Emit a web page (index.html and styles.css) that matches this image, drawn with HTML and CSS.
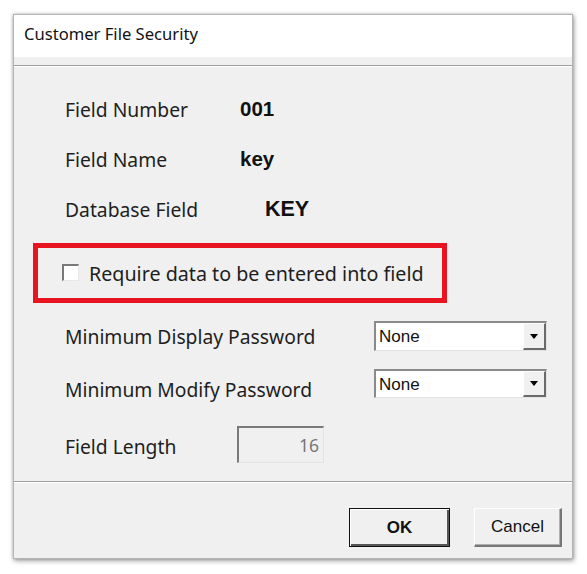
FILE: index.html
```html
<!DOCTYPE html>
<html>
<head>
<meta charset="utf-8">
<link rel="stylesheet" href="styles.css">
</head>
<body>
<div class="window">
  <div class="titlebar">Customer File Security</div>
  <div class="band"></div>
  <div class="panel">
    <div class="info">
      <div class="row"><span class="label">Field Number</span><span class="value">001</span></div>
      <div class="row"><span class="label">Field Name</span><span class="value">key</span></div>
      <div class="row"><span class="label">Database Field</span><span class="value value-shift">KEY</span></div>
    </div>
    <div class="highlight">
      <span class="checkbox"></span>
      <span class="check-label">Require data to be entered into field</span>
    </div>
    <div class="form-row row-display">
      <span class="label">Minimum Display Password</span>
      <div class="select"><span class="select-text">None</span><span class="select-btn"><span class="arrow"></span></span></div>
    </div>
    <div class="form-row row-modify">
      <span class="label label-low">Minimum Modify Password</span>
      <div class="select"><span class="select-text">None</span><span class="select-btn"><span class="arrow"></span></span></div>
    </div>
    <div class="form-row row-length">
      <span class="label label-short">Field Length</span>
      <div class="numbox">16</div>
    </div>
  </div>
  <div class="footer">
    <button class="btn btn-ok">OK</button>
    <button class="btn btn-cancel">Cancel</button>
  </div>
</div>
</body>
</html>
```
FILE: styles.css
```css
* { box-sizing: border-box; }
html, body { margin: 0; padding: 0; background: #ffffff; }
body { width: 587px; height: 574px; overflow: hidden; }

.window {
  margin: 14px 0 0 13px;
  width: 560px;
  height: 545px;
  background: #f0f0f0;
  border: 1px solid #b4b4b4;
  box-shadow: 1px 2px 5px rgba(0,0,0,0.35), 0 0 3px rgba(0,0,0,0.2);
  display: flex;
  flex-direction: column;
}

.titlebar {
  height: 42px;
  background: #ffffff;
  padding: 0 0 5px 10px;
  display: flex;
  align-items: center;
  font-family: "Noto Sans", sans-serif;
  font-size: 16.6px;
  color: #111;
}

.band { height: 8px; background: #f0f0f0; }

.panel {
  height: 417px;
  border-top: 1px solid #a0a0a0;
  border-bottom: 1px solid #a0a0a0;
  box-shadow: inset 0 1px 0 #ffffff;
  padding: 18px 0 0 19px;
  display: flex;
  flex-direction: column;
  font-family: "Noto Sans", sans-serif;
  color: #222;
}

.info { padding-left: 32px; }
.row {
  height: 50px;
  display: flex;
  align-items: center;
}
.label {
  font-size: 19.3px;
  color: #1e1e1e;
  flex-shrink: 0;
}
.row .label { width: 175px; padding-top: 1px; }
.value {
  font-family: "Liberation Sans", Arial, sans-serif;
  font-weight: bold;
  font-size: 20.5px;
  color: #111;
}
.value-shift { margin-left: 25px; font-size: 21.5px; }

.highlight {
  margin-top: 9px;
  width: 414px;
  height: 60px;
  border: 5px solid #e8141f;
  display: flex;
  align-items: center;
  padding-left: 24px;
}
.checkbox {
  width: 17px;
  height: 17px;
  background: #ffffff;
  border-top: 2px solid #7a7a7a;
  border-left: 2px solid #7a7a7a;
  border-right: 1px solid #e6e6e6;
  border-bottom: 1px solid #e6e6e6;
  margin-top: -2px;
  flex-shrink: 0;
}
.check-label {
  margin-left: 10px;
  font-size: 19.7px;
  color: #1e1e1e;
  white-space: nowrap;
}

.form-row {
  display: flex;
  align-items: center;
  padding-left: 32px;
}
.form-row .label { width: 309px; }
.row-display { margin-top: 18px; height: 30px; }
.row-modify { margin-top: 18px; height: 29px; }
.row-length { margin-top: 28px; height: 37px; }
.label-low { padding-top: 12px; }
.form-row .label-short { width: 172px; padding-top: 3px; }

.select {
  width: 173px;
  height: 100%;
  background: #ffffff;
  border-top: 2px solid #8a8a8a;
  border-left: 2px solid #8a8a8a;
  border-right: 1px solid #e3e3e3;
  border-bottom: 1px solid #e3e3e3;
  display: flex;
  align-items: stretch;
}
.select-text {
  flex: 1;
  display: flex;
  align-items: center;
  padding-left: 3px;
  padding-top: 1px;
  font-family: "Liberation Sans", Arial, sans-serif;
  font-size: 17px;
  color: #111;
}
.select-btn {
  width: 23px;
  background: #f0f0f0;
  border-top: 1px solid #ffffff;
  border-left: 1px solid #ffffff;
  border-right: 2px solid #6a6a6a;
  border-bottom: 2px solid #6a6a6a;
  display: flex;
  align-items: center;
  justify-content: center;
}
.arrow {
  width: 0;
  height: 0;
  border-left: 4px solid transparent;
  border-right: 4px solid transparent;
  border-top: 5px solid #000;
}

.numbox {
  width: 87px;
  height: 37px;
  background: #f0f0f0;
  border-top: 2px solid #7a7a7a;
  border-left: 2px solid #7a7a7a;
  border-right: 1px solid #e3e3e3;
  border-bottom: 1px solid #e3e3e3;
  display: flex;
  align-items: center;
  justify-content: flex-end;
  padding-right: 4px;
  font-size: 17.5px;
  color: #777;
}

.footer {
  flex: 1;
  border-top: 1px solid #ffffff;
  display: flex;
  justify-content: flex-end;
  align-items: flex-start;
  padding: 25px 10px 0 0;
  gap: 24px;
}
.btn {
  height: 39px;
  background: #f0f0f0;
  font-family: "Liberation Sans", Arial, sans-serif;
  font-size: 17px;
  color: #111;
  padding: 0;
  margin: 0;
}
.btn-ok {
  width: 101px;
  font-weight: bold;
  border: 1px solid #111;
  box-shadow: inset 1px 1px 0 #ffffff, inset -2px -2px 0 #555;
}
.btn-cancel {
  width: 88px;
  border-top: 1px solid #ffffff;
  border-left: 1px solid #ffffff;
  border-right: 2px solid #777;
  border-bottom: 2px solid #777;
  box-shadow: inset -1px -1px 0 #b0b0b0;
}
```
